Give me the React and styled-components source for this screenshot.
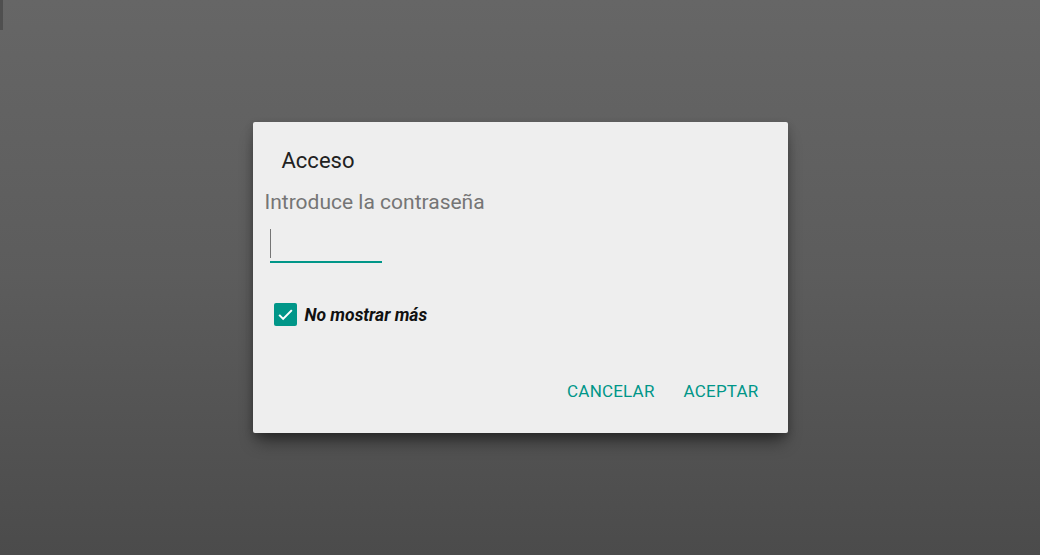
import React, { useState } from 'react';
import styled, { createGlobalStyle } from 'styled-components';

const GlobalStyle = createGlobalStyle`
    html, body {
        margin: 0;
        padding: 0;
        height: 100%;
    }
    body {
        font-family: Roboto, "Liberation Sans", sans-serif;
        background: #555;
    }
`;

const Screen = styled.div`
    position: relative;
    height: 555px;
    display: flex;
    align-items: center;
    justify-content: center;
    background: linear-gradient(180deg, #666666 0%, #5c5c5c 50%, #4b4b4b 100%);
`;

const EdgeMark = styled.div`
    position: absolute;
    left: 0;
    top: 0;
    width: 3px;
    height: 30px;
    background: #4f4f4f;
`;

const Dialog = styled.div`
    width: 535px;
    height: 311px;
    box-sizing: border-box;
    background: #eeeeee;
    border-radius: 2px;
    box-shadow: 0 12px 16px -4px rgba(0, 0, 0, 0.45), 0 3px 8px rgba(0, 0, 0, 0.2);
    display: flex;
    flex-direction: column;
    padding: 0 29px 0 12px;
`;

const Title = styled.h2`
    margin: 26px 0 0 17px;
    font-size: 22px;
    font-weight: 400;
    line-height: 26px;
    color: #212121;
`;

const Prompt = styled.p`
    margin: 15px 0 0 0;
    font-size: 21px;
    line-height: 26px;
    color: #757575;
`;

const Field = styled.div`
    margin: 13px 0 0 5px;
    width: 112px;
    height: 33px;
    border-bottom: 2px solid #009688;
    display: flex;
    align-items: flex-start;
`;

const Caret = styled.span`
    display: block;
    width: 1px;
    height: 29px;
    margin-top: 1px;
    background: #757575;
`;

const CheckRow = styled.label`
    display: flex;
    align-items: center;
    gap: 8px;
    margin: 40px 0 0 9px;
    cursor: pointer;
`;

const Box = styled.span`
    width: 23px;
    height: 23px;
    border-radius: 2px;
    background: ${p => (p.$checked ? '#009688' : 'transparent')};
    border: ${p => (p.$checked ? 'none' : '2px solid #757575')};
    display: flex;
    align-items: center;
    justify-content: center;
`;

const CheckLabel = styled.span`
    font-size: 17.5px;
    font-weight: 700;
    font-style: italic;
    color: #111;
`;

const Actions = styled.div`
    margin-top: auto;
    margin-bottom: 32px;
    display: flex;
    justify-content: flex-end;
    gap: 29px;
`;

const TextButton = styled.button`
    border: none;
    background: none;
    padding: 0;
    font-family: inherit;
    font-size: 17px;
    font-weight: 400;
    letter-spacing: 0.2px;
    color: #009688;
    text-transform: uppercase;
    cursor: pointer;
`;

const App = () => {
    const [checked, setChecked] = useState(true);
    return (
        <>
            <GlobalStyle />
            <Screen>
                <EdgeMark />
                <Dialog>
                    <Title>Acceso</Title>
                    <Prompt>Introduce la contraseña</Prompt>
                    <Field>
                        <Caret />
                    </Field>
                    <CheckRow onClick={() => setChecked(!checked)}>
                        <Box $checked={checked}>
                            {checked && (
                                <svg width="19" height="19" viewBox="0 0 24 24">
                                    <path d="M4 12.5l5 5L20 6.5" fill="none" stroke="#fff" strokeWidth="2.6" />
                                </svg>
                            )}
                        </Box>
                        <CheckLabel>No mostrar más</CheckLabel>
                    </CheckRow>
                    <Actions>
                        <TextButton>Cancelar</TextButton>
                        <TextButton>Aceptar</TextButton>
                    </Actions>
                </Dialog>
            </Screen>
        </>
    );
};

export default App;
